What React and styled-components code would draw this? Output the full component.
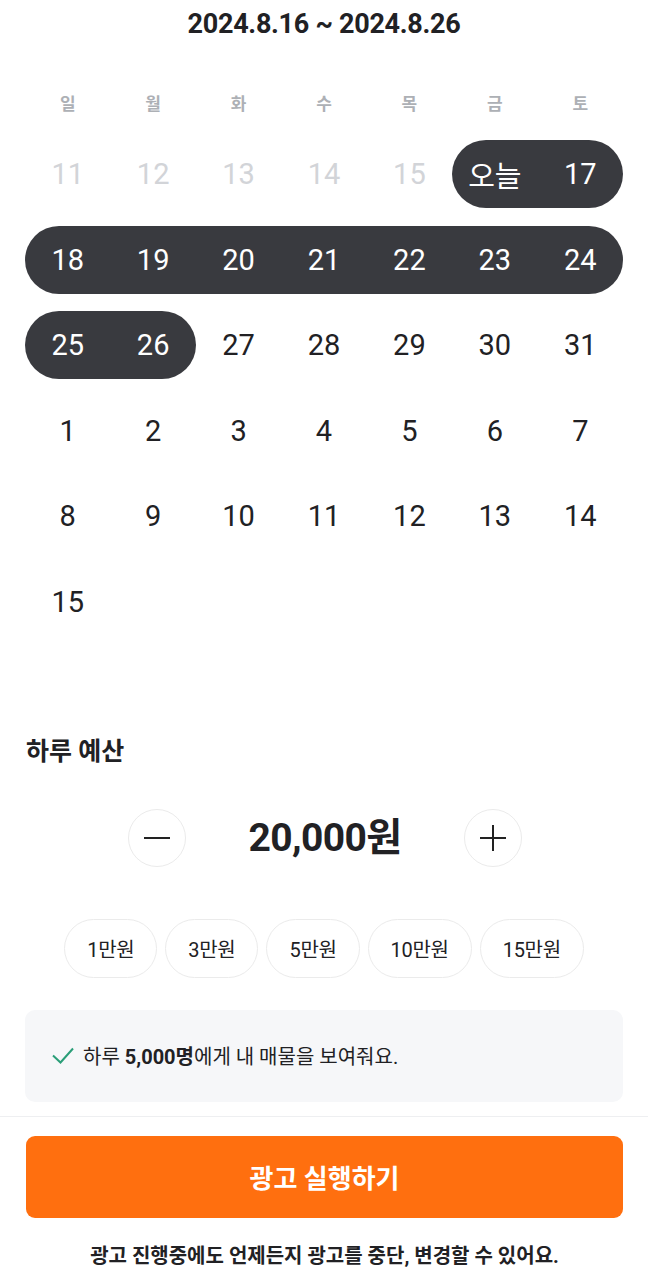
import React from "react";
import styled, { createGlobalStyle } from "styled-components";

const GlobalStyle = createGlobalStyle`
  * { box-sizing: border-box; }
  html, body { margin: 0; padding: 0; background: #fff; }
  body {
    font-family: Roboto, "Noto Sans CJK KR", "Noto Sans", sans-serif;
    color: #212124;
    -webkit-font-smoothing: antialiased;
  }
`;

const Page = styled.div`
  width: 648px;
  display: flex;
  flex-direction: column;
`;

const Content = styled.div`
  padding: 0 25px;
  display: flex;
  flex-direction: column;
`;

const RangeTitle = styled.h1`
  margin: 0;
  height: 48px;
  line-height: 48px;
  text-align: center;
  font-size: 27px;
  font-weight: 700;
  letter-spacing: -0.3px;
  color: #212124;
`;

const WeekHeader = styled.div`
  margin-top: 34px;
  height: 40px;
  display: grid;
  grid-template-columns: repeat(7, 1fr);
  align-items: center;
`;

const WeekDay = styled.div`
  text-align: center;
  font-size: 17px;
  font-weight: 700;
  color: #adb0b5;
`;

const Grid = styled.div`
  margin-top: 18px;
  display: grid;
  grid-template-columns: repeat(7, 1fr);
  grid-auto-rows: 68px;
  row-gap: 17.5px;
`;

const DayCell = styled.div`
  display: flex;
  align-items: center;
  justify-content: center;
  font-size: 29px;
  font-weight: 400;
  color: ${(p) => (p.$selected ? "#ffffff" : p.$past ? "#d2d4d8" : "#212124")};
  background: ${(p) => (p.$selected ? "#393a3f" : "transparent")};
  border-top-left-radius: ${(p) => (p.$start ? "34px" : "0")};
  border-bottom-left-radius: ${(p) => (p.$start ? "34px" : "0")};
  border-top-right-radius: ${(p) => (p.$end ? "34px" : "0")};
  border-bottom-right-radius: ${(p) => (p.$end ? "34px" : "0")};
`;

const SectionTitle = styled.h2`
  margin: 100px 0 0 1px;
  height: 32px;
  line-height: 32px;
  font-size: 25px;
  font-weight: 700;
  letter-spacing: 0;
  color: #212124;
`;

const Stepper = styled.div`
  margin-top: 41px;
  display: grid;
  grid-template-columns: 58px 278px 58px;
  justify-content: center;
  align-items: center;
  margin-left: -25px;
  margin-right: -25px;
  padding-left: 2px;
`;

const RoundButton = styled.button`
  width: 58px;
  height: 58px;
  border-radius: 50%;
  border: 1px solid #ebebeb;
  background: #fff;
  padding: 0;
  display: flex;
  align-items: center;
  justify-content: center;
  cursor: pointer;
`;

const Amount = styled.div`
  text-align: center;
  font-size: 39px;
  font-weight: 700;
  letter-spacing: -0.6px;
  color: #212124;
  line-height: 58px;
`;

const Chips = styled.div`
  margin-top: 52px;
  display: flex;
  justify-content: center;
  gap: 8px;
`;

const Chip = styled.button`
  height: 59px;
  padding: 0 22px;
  border-radius: 30px;
  border: 1px solid #ebebeb;
  background: #fff;
  font-family: inherit;
  font-size: 20px;
  font-weight: 400;
  letter-spacing: -0.3px;
  color: #212124;
  cursor: pointer;
`;

const InfoBox = styled.div`
  margin-top: 32px;
  height: 92px;
  border-radius: 10px;
  background: #f6f7f9;
  display: flex;
  align-items: center;
  padding-left: 27px;
  gap: 9px;
  font-size: 20px;
  letter-spacing: 0;
  color: #212124;
`;

const Strong = styled.b`
  font-weight: 700;
`;

const Footer = styled.div`
  margin-top: 14px;
  border-top: 1px solid #eeeff1;
  padding: 19px 25px 18px 26px;
  display: flex;
  flex-direction: column;
  align-items: stretch;
`;

const PrimaryButton = styled.button`
  height: 82px;
  border: none;
  border-radius: 9px;
  background: #ff6f0f;
  color: #fff;
  font-family: inherit;
  font-size: 26px;
  font-weight: 700;
  letter-spacing: 0;
  cursor: pointer;
`;

const Notice = styled.p`
  margin: 26px 0 0;
  height: 24px;
  line-height: 24px;
  text-align: center;
  font-size: 20px;
  font-weight: 700;
  letter-spacing: 0;
  color: #212124;
`;

const weekDays = ["일", "월", "화", "수", "목", "금", "토"];

const days = [
  { label: "11", past: true },
  { label: "12", past: true },
  { label: "13", past: true },
  { label: "14", past: true },
  { label: "15", past: true },
  { label: "오늘", selected: true, start: true },
  { label: "17", selected: true, end: true },
  { label: "18", selected: true, start: true },
  { label: "19", selected: true },
  { label: "20", selected: true },
  { label: "21", selected: true },
  { label: "22", selected: true },
  { label: "23", selected: true },
  { label: "24", selected: true, end: true },
  { label: "25", selected: true, start: true },
  { label: "26", selected: true, end: true },
  { label: "27" },
  { label: "28" },
  { label: "29" },
  { label: "30" },
  { label: "31" },
  { label: "1" },
  { label: "2" },
  { label: "3" },
  { label: "4" },
  { label: "5" },
  { label: "6" },
  { label: "7" },
  { label: "8" },
  { label: "9" },
  { label: "10" },
  { label: "11" },
  { label: "12" },
  { label: "13" },
  { label: "14" },
  { label: "15" },
];

const chips = ["1만원", "3만원", "5만원", "10만원", "15만원"];

const MinusIcon = () => (
  <svg width="28" height="28" viewBox="0 0 28 28">
    <line x1="1" y1="14" x2="27" y2="14" stroke="#222" strokeWidth="2" />
  </svg>
);

const PlusIcon = () => (
  <svg width="28" height="28" viewBox="0 0 28 28">
    <line x1="1" y1="14" x2="27" y2="14" stroke="#222" strokeWidth="2" />
    <line x1="14" y1="1" x2="14" y2="27" stroke="#222" strokeWidth="2" />
  </svg>
);

const CheckIcon = () => (
  <svg width="22" height="17" viewBox="0 0 22 17">
    <path d="M1 8.5 L8.5 15.5 L21 1.5" fill="none" stroke="#2a9e78" strokeWidth="2" />
  </svg>
);

export default function App() {
  return (
    <>
      <GlobalStyle />
      <Page>
        <Content>
          <RangeTitle>2024.8.16 ~ 2024.8.26</RangeTitle>
          <WeekHeader>
            {weekDays.map((d) => (
              <WeekDay key={d}>{d}</WeekDay>
            ))}
          </WeekHeader>
          <Grid>
            {days.map((d, i) => (
              <DayCell
                key={i}
                $past={d.past}
                $selected={d.selected}
                $start={d.start}
                $end={d.end}
              >
                {d.label}
              </DayCell>
            ))}
          </Grid>
          <SectionTitle>하루 예산</SectionTitle>
          <Stepper>
            <RoundButton aria-label="감소">
              <MinusIcon />
            </RoundButton>
            <Amount>20,000원</Amount>
            <RoundButton aria-label="증가">
              <PlusIcon />
            </RoundButton>
          </Stepper>
          <Chips>
            {chips.map((c) => (
              <Chip key={c}>{c}</Chip>
            ))}
          </Chips>
          <InfoBox>
            <CheckIcon />
            <span>
              하루 <Strong>5,000명</Strong>에게 내 매물을 보여줘요.
            </span>
          </InfoBox>
        </Content>
        <Footer>
          <PrimaryButton>광고 실행하기</PrimaryButton>
          <Notice>광고 진행중에도 언제든지 광고를 중단, 변경할 수 있어요.</Notice>
        </Footer>
      </Page>
    </>
  );
}
